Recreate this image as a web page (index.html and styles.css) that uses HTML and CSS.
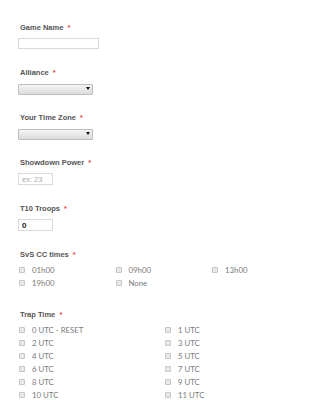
FILE: index.html
```html
<!DOCTYPE html>
<html lang="en">
<head>
    <meta charset="UTF-8">
    <meta name="viewport" content="width=device-width, initial-scale=1.0">
    <title>Game Registration</title>
    <link rel="stylesheet" href="styles.css">
</head>
<body>
    <form class="form">
        <div class="field">
            <label class="field-label">Game Name <span class="req">*</span></label>
            <input class="text-input wide" type="text">
        </div>

        <div class="field">
            <label class="field-label">Alliance <span class="req">*</span></label>
            <div class="select-wrap">
                <select class="select-input"><option></option></select>
            </div>
        </div>

        <div class="field">
            <label class="field-label">Your Time Zone <span class="req">*</span></label>
            <div class="select-wrap">
                <select class="select-input"><option></option></select>
            </div>
        </div>

        <div class="field">
            <label class="field-label">Showdown Power <span class="req">*</span></label>
            <input class="text-input short" type="text" placeholder="ex: 23">
        </div>

        <div class="field">
            <label class="field-label">T10 Troops <span class="req">*</span></label>
            <input class="text-input short filled" type="text" value="0">
        </div>

        <div class="field field-checks">
            <label class="field-label">SvS CC times <span class="req">*</span></label>
            <div class="options cols-3">
                <label class="option"><input type="checkbox"><span>01h00</span></label>
                <label class="option"><input type="checkbox"><span>09h00</span></label>
                <label class="option"><input type="checkbox"><span>13h00</span></label>
                <label class="option"><input type="checkbox"><span>19h00</span></label>
                <label class="option"><input type="checkbox"><span>None</span></label>
            </div>
        </div>

        <div class="field field-checks">
            <label class="field-label">Trap Time <span class="req">*</span></label>
            <div class="options cols-2">
                <label class="option"><input type="checkbox"><span>0 UTC - RESET</span></label>
                <label class="option"><input type="checkbox"><span>1 UTC</span></label>
                <label class="option"><input type="checkbox"><span>2 UTC</span></label>
                <label class="option"><input type="checkbox"><span>3 UTC</span></label>
                <label class="option"><input type="checkbox"><span>4 UTC</span></label>
                <label class="option"><input type="checkbox"><span>5 UTC</span></label>
                <label class="option"><input type="checkbox"><span>6 UTC</span></label>
                <label class="option"><input type="checkbox"><span>7 UTC</span></label>
                <label class="option"><input type="checkbox"><span>8 UTC</span></label>
                <label class="option"><input type="checkbox"><span>9 UTC</span></label>
                <label class="option"><input type="checkbox"><span>10 UTC</span></label>
                <label class="option"><input type="checkbox"><span>11 UTC</span></label>
            </div>
        </div>
    </form>
</body>
</html>
```

FILE: styles.css
```css
* {
    margin: 0;
    padding: 0;
    box-sizing: border-box;
}

body {
    font-family: "Liberation Sans", Arial, sans-serif;
    background: white;
    height: 400px;
    overflow: hidden;
}

.form {
    padding: 23px 0 0 18px;
}

.field {
    display: flex;
    flex-direction: column;
    align-items: flex-start;
    margin-bottom: 19px;
}

.field-label {
    display: block;
    padding-left: 2px;
    font-size: 7.5px;
    line-height: 10px;
    font-weight: bold;
    color: #555;
    margin-bottom: 5px;
}

.req {
    color: #f23a3c;
    margin-left: 2px;
}

.text-input {
    border: 1px solid #dadada;
    background: white;
    font-family: "Liberation Sans", Arial, sans-serif;
    font-size: 7.5px;
    color: #333;
    padding: 0 3px;
    outline: none;
}

.text-input.wide {
    width: 81px;
    height: 11px;
}

.text-input.short {
    width: 35px;
    height: 12px;
}

.text-input::placeholder {
    color: #aaa;
}

.text-input.filled {
    color: #222;
    font-weight: bold;
    font-size: 8px;
}

.select-wrap {
    position: relative;
    width: 75px;
    height: 11px;
}

.select-input {
    appearance: none;
    -webkit-appearance: none;
    width: 100%;
    height: 100%;
    border: 1px solid #bdbdbd;
    border-radius: 1px;
    background: linear-gradient(#f4f4f4, #dcdcdc);
    outline: none;
}

.select-wrap::after {
    content: '';
    position: absolute;
    right: 3px;
    top: 4px;
    border-left: 2px solid transparent;
    border-right: 2px solid transparent;
    border-top: 3px solid #111;
}

.field-checks .field-label {
    margin-bottom: 3px;
}

.field-checks {
    margin-bottom: 21px;
}

.options {
    display: grid;
    margin-left: 1px;
}

.cols-3 {
    grid-template-columns: repeat(3, 96.5px);
}

.cols-2 {
    grid-template-columns: repeat(2, 146px);
}

.option {
    display: flex;
    align-items: center;
    height: 13px;
    font-family: Lato, "Liberation Sans", sans-serif;
    font-size: 7.8px;
    color: #7a7a7a;
}

.option input {
    appearance: none;
    -webkit-appearance: none;
    width: 6px;
    height: 6px;
    border: 1px solid #c6c6c6;
    border-radius: 1px;
    background: #e8e8e8;
    margin-right: 7px;
}
```
